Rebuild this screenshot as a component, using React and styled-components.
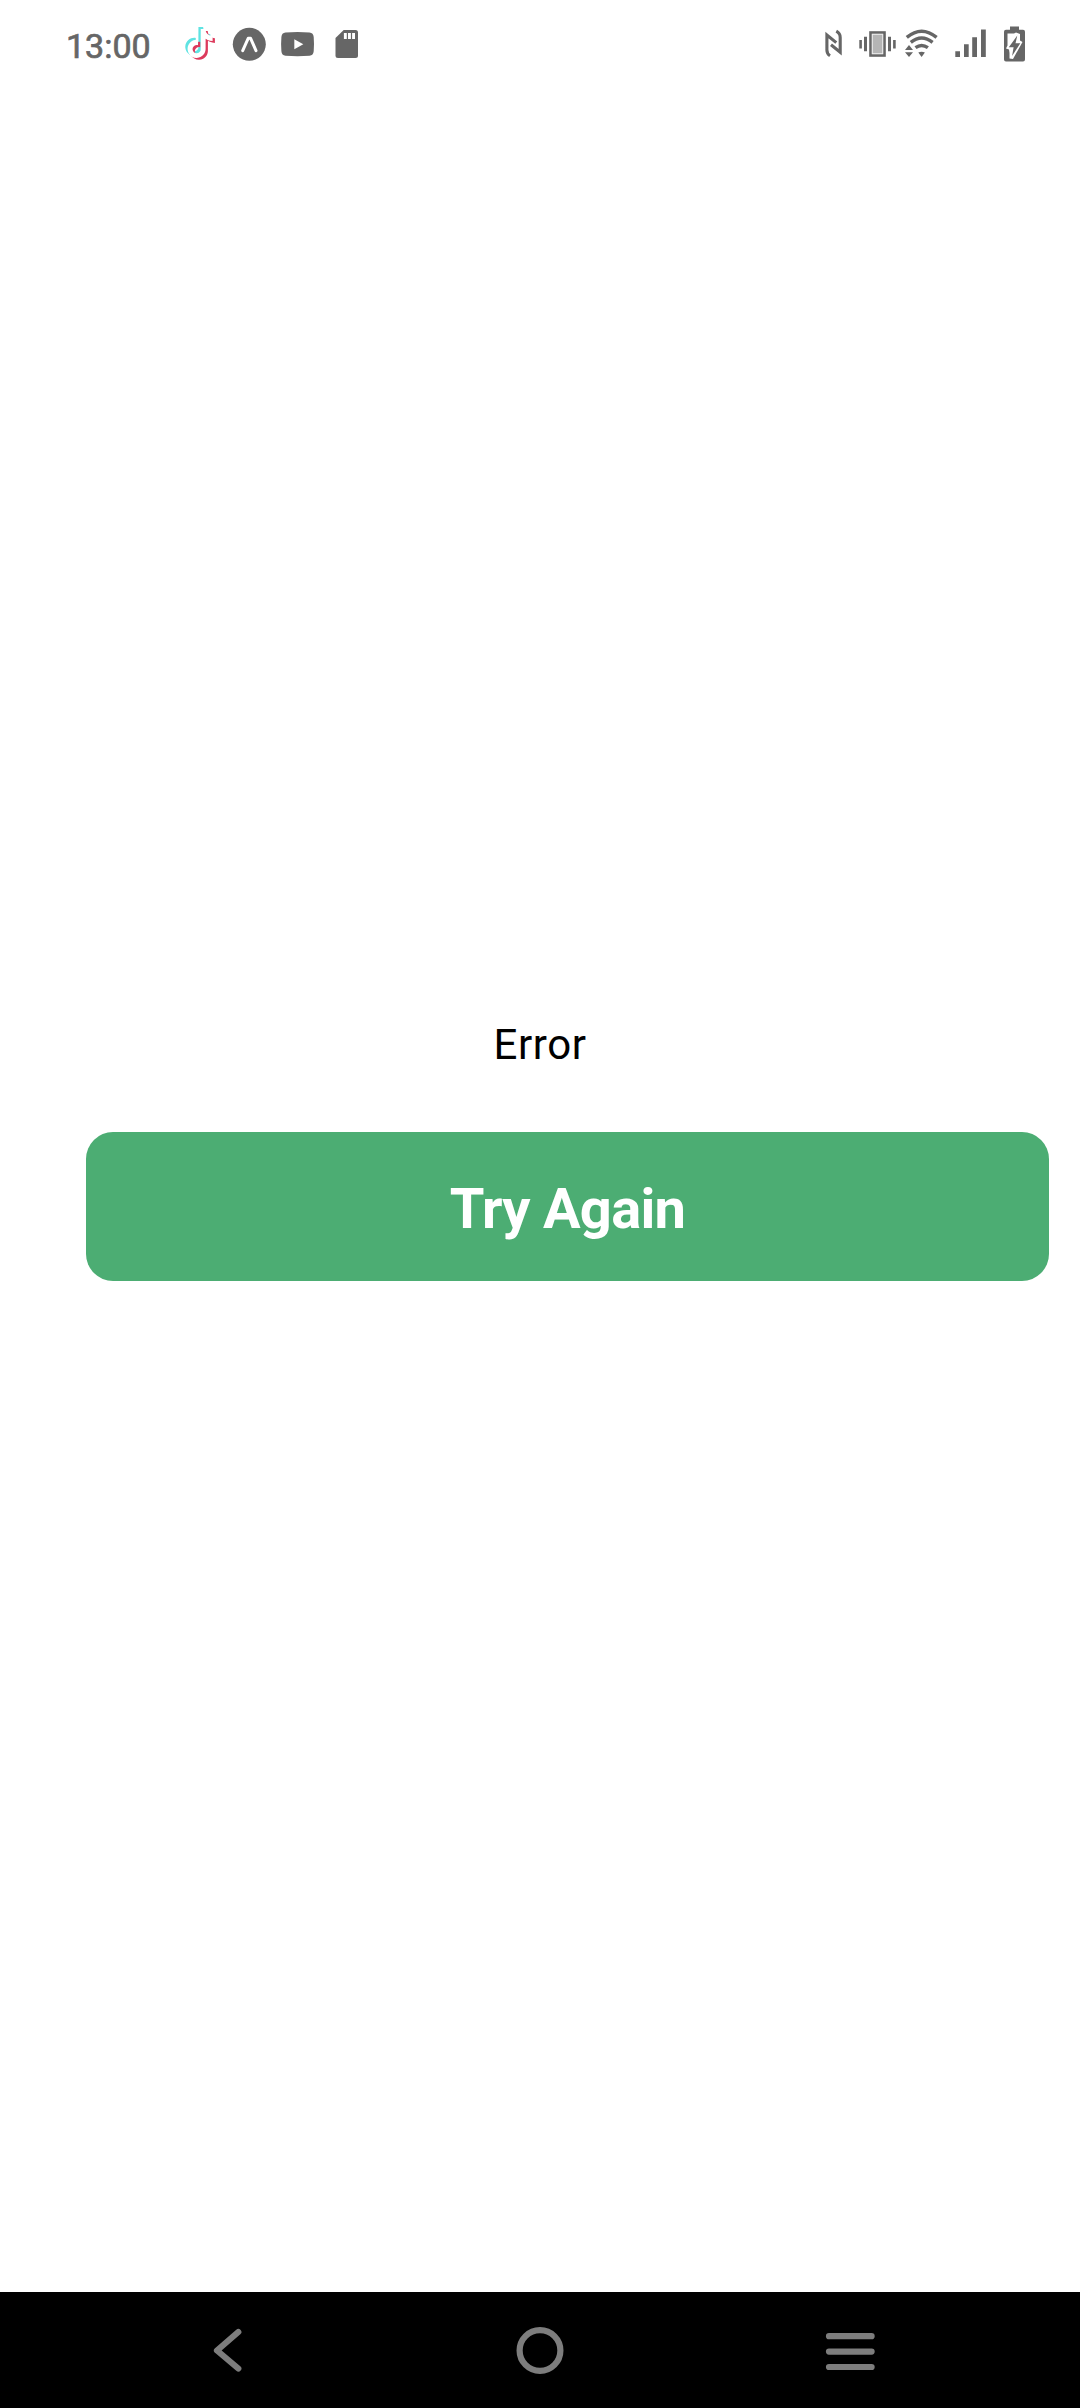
import React from "react";
import styled, { createGlobalStyle } from "styled-components";

const GlobalStyle = createGlobalStyle`
  * { box-sizing: border-box; }
  html, body { margin: 0; padding: 0; background: #fff; }
`;

const Screen = styled.div`
  display: flex;
  flex-direction: column;
  width: 1080px;
  height: 2408px;
  background: #fff;
  font-family: Roboto, "Noto Sans", sans-serif;
`;

const StatusBar = styled.header`
  display: flex;
  align-items: center;
  flex: none;
  height: 88px;
  padding: 0 54px 0 66px;
  color: #666;
`;

const Clock = styled.time`
  width: 118px;
  padding-top: 3px;
  font-size: 34px;
  font-weight: 400;
  line-height: 40px;
  white-space: nowrap;
  -webkit-text-stroke: 0.7px #666;
`;

const IconGroup = styled.div`
  display: flex;
  margin-left: ${(p) => (p.$end ? "auto" : "0")};
`;

const Glyph = styled.svg`
  display: block;
  flex: none;
  width: ${(p) => p.$w}px;
  height: 40px;
  margin-left: ${(p) => p.$shift || 0}px;
  overflow: visible;
`;

const Content = styled.main`
  display: flex;
  flex-direction: column;
  flex: 1;
  padding: 928px 31px 0 86px;
`;

const Message = styled.p`
  margin: 0 -31px 60px -86px;
  font-size: 42px;
  line-height: 58px;
  height: 56px;
  text-align: center;
  letter-spacing: 0.6px;
  color: #000;
`;

const RetryButton = styled.button`
  display: flex;
  align-items: center;
  justify-content: center;
  height: 149px;
  padding: 4px 0 0;
  border: 0;
  border-radius: 27px;
  background: #4cad73;
  color: #fff;
  font: 700 56px/66px Roboto, "Noto Sans", sans-serif;
  letter-spacing: -0.7px;
`;

const NavBar = styled.nav`
  display: flex;
  align-items: center;
  justify-content: space-between;
  flex: none;
  height: 116px;
  padding: 0 204px 0 211px;
  background: #000;
`;

const NavIcon = styled.svg`
  display: block;
  width: ${(p) => p.$w}px;
  height: 50px;
  margin-left: ${(p) => p.$shift || 0}px;
  fill: none;
  stroke: #7d7d7d;
  stroke-width: 6.2;
  stroke-linecap: round;
  stroke-linejoin: round;
`;

const NOTE =
  "M12.525.02c1.31-.02 2.61-.01 3.91-.02.08 1.53.63 3.09 1.75 4.17 1.12 1.11 2.7 1.62 4.24 1.79v4.03c-1.44-.05-2.89-.35-4.2-.97-.57-.26-1.1-.59-1.62-.93-.01 2.92.01 5.84-.02 8.75-.08 1.4-.54 2.79-1.35 3.94-1.31 1.92-3.58 3.17-5.91 3.21-1.43.08-2.86-.31-4.08-1.03-2.02-1.19-3.44-3.37-3.65-5.71-.02-.5-.03-1-.01-1.49.18-1.9 1.12-3.72 2.58-4.96 1.66-1.44 3.98-2.13 6.15-1.72.02 1.48-.04 2.96-.04 4.44-.99-.32-2.15-.23-3.02.37-.63.41-1.11 1.04-1.36 1.75-.21.51-.15 1.07-.14 1.61.24 1.64 1.82 3.02 3.5 2.87 1.12-.01 2.19-.66 2.77-1.61.19-.33.4-.67.41-1.06.1-1.79.06-3.57.07-5.36.01-4.03-.01-8.05.02-12.07z";

const TikTokIcon = () => (
  <Glyph $w={33} viewBox="0 0 33 40">
    <path d={NOTE} fill="#5fe3e2" transform="translate(-0.600 3.100) scale(1.200)" />
    <path d={NOTE} fill="#dc3a5c" transform="translate(4 7) scale(1.200)" />
    <path d={NOTE} fill="#fff" transform="translate(1.700 5.100) scale(1.200)" />
  </Glyph>
);

const ExpoIcon = () => (
  <Glyph $w={35} $shift={15} viewBox="0 0 35 40">
    <circle cx="17.3" cy="20.3" r="16.5" fill="#666" />
    <path
      d="M10.7 26.6 16.2 14.3h2.4L24 26.6"
      fill="none"
      stroke="#fff"
      strokeWidth="3"
      strokeLinecap="round"
      strokeLinejoin="round"
    />
  </Glyph>
);

const YouTubeIcon = () => (
  <Glyph $w={35} $shift={13} viewBox="0 0 35 40">
    <path
      d="M5.5 8.6Q17.5 7.6 29.5 8.6 33.4 9 33.7 13 34.3 20 33.7 27.3 33.4 31.4 29.5 31.8 17.5 32.6 5.5 31.8 1.7 31.4 1.4 27.3.8 20 1.4 13 1.7 9 5.5 8.6Z"
      fill="#666"
    />
    <path d="M14.3 15.3v10l9-5z" fill="#fff" />
  </Glyph>
);

const SdCardIcon = () => (
  <Glyph $w={24} $shift={20} viewBox="0 0 24 40">
    <path
      d="M8.7 6H20.5a2.5 2.5 0 0 1 2.5 2.5V31.5a2.5 2.5 0 0 1-2.5 2.5H3a2.5 2.5 0 0 1-2.5-2.5V14z"
      fill="#666"
    />
    <path d="M8.900 9h2.900v6h-2.900zM13 9h2.900v6H13zM17.100 9H20v6h-2.900z" fill="#fff" />
  </Glyph>
);

const NfcIcon = () => (
  <Glyph $w={19} viewBox="0 0 19 40">
    <path
      d="M6 31.700Q2.900 29.800 2.900 26V11L12.300 18.600M12.300 7.200Q16.200 9.200 16.200 13.500V28.200L7 20.800"
      fill="none"
      stroke="#666"
      strokeWidth="3.100"
    />
  </Glyph>
);

const VibrateIcon = () => (
  <Glyph $w={39} $shift={15} viewBox="0 0 39 40">
    <rect x="12.5" y="8.5" width="14" height="23" fill="#b5b5b5" stroke="#666" strokeWidth="2.6" />
    <rect x="14.3" y="10.3" width="10.4" height="19.4" fill="none" stroke="#eee" strokeWidth="1" />
    <path
      d="M1.300 16h2.600v8.400H1.300zM6 12.700h3v14.600H6zM30 12.700h3v14.600h-3zM35.100 16h2.600v8.400h-2.600z"
      fill="#666"
    />
  </Glyph>
);

const WifiIcon = () => (
  <Glyph $w={35} $shift={7} viewBox="0 0 35 40">
    <g fill="none" stroke="#666" strokeWidth="3.4">
      <path d="M2.800 13.400Q17.600 .9 32.600 13.400" />
      <path d="M6.800 18.300Q17.600 9.700 28.600 18.300" />
      <path d="M11.500 23.700Q17.600 19.200 23.900 23.700" />
    </g>
    <path
      d="M14.300 28.600Q17.600 26.800 20.900 28.600L17.600 33zM1 26.100 5 21l4 5.100zM1 28.300h8L5 33z"
      fill="#666"
    />
  </Glyph>
);

const SignalIcon = () => (
  <Glyph $w={33} $shift={15} viewBox="0 0 33 40">
    <path
      d="M1.300 27.300H6V33H1.300zM10 20.200h4.700V33H10zM18.200 13.200h4.800V33h-4.800zM27 5.600h4.800V33H27z"
      fill="#666"
    />
  </Glyph>
);

const BatteryIcon = () => (
  <Glyph $w={23} $shift={16} viewBox="0 0 23 40">
    <path
      d="M7 2.500h9v3.300h4a2 2 0 0 1 2 2V35.600a2 2 0 0 1-2 2H3a2 2 0 0 1-2-2V7.800a2 2 0 0 1 2-2h4z"
      fill="#666"
    />
    <path d="M4.500 9.500H11L13 8.500 17 10V16.500L19.500 18 10 35 6.500 34.500V29L6 25.500 3 24.500 4.500 21.500z" fill="#fff" />
    <path d="M14.300 11.600 5.800 23.200h4.800L9.100 32 17.300 19.300h-4.800z" fill="#666" />
  </Glyph>
);

export default function App() {
  return (
    <>
      <GlobalStyle />
      <Screen>
        <StatusBar>
          <Clock>13:00</Clock>
          <IconGroup>
            <TikTokIcon />
            <ExpoIcon />
            <YouTubeIcon />
            <SdCardIcon />
          </IconGroup>
          <IconGroup $end>
            <NfcIcon />
            <VibrateIcon />
            <WifiIcon />
            <SignalIcon />
            <BatteryIcon />
          </IconGroup>
        </StatusBar>
        <Content>
          <Message>Error</Message>
          <RetryButton type="button">Try Again</RetryButton>
        </Content>
        <NavBar>
          <NavIcon $w={32} viewBox="0 0 32 50">
            <path d="M27.300 7 6 25.500 27.300 43.500" />
          </NavIcon>
          <NavIcon $w={50} $shift={13.6} viewBox="0 0 50 50">
            <circle cx="25" cy="25.500" r="20.400" />
          </NavIcon>
          <NavIcon $w={53} viewBox="0 0 53 50">
            <path d="M6 11.200H48.600M6 26.600H48.600M6 42H48.600" />
          </NavIcon>
        </NavBar>
      </Screen>
    </>
  );
}
